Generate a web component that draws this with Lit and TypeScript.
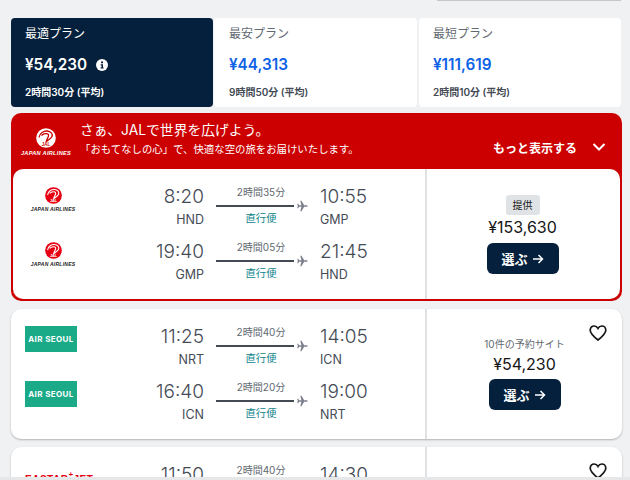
import { LitElement, css, html, svg } from 'lit';
import { customElement } from 'lit/decorators.js';

interface Leg {
  dep: string;
  depCode: string;
  dur: string;
  arr: string;
  arrCode: string;
}

const planeIcon = svg`<path d="M11 6c0-.5-.5-.9-1.200-.9H7.400L4.600.6H3.400l1.200 4.500H2.200L1.200 3.700H.3l.5 2.300-.5 2.300h.9l1-1.400h2.400L3.400 11.400h1.200l2.800-4.500h2.400C10.500 6.900 11 6.500 11 6z"/>`;

@customElement('jal-logo')
export class JalLogo extends LitElement {
  static properties = { light: { type: Boolean, reflect: true } };
  declare light: boolean;

  static styles = css`
    :host {
      display: flex;
      flex-direction: column;
      align-items: center;
      width: 52px;
      margin-left: 2px;
    }
    :host([light]) {
      margin-left: 0;
    }
    svg {
      display: block;
      width: 17px;
      height: 17px;
    }
    :host([light]) svg {
      width: 20px;
      height: 20px;
    }
    .jal {
      font: 700 4.500px 'Liberation Sans', sans-serif;
    }
    .name {
      font: italic 900 5px/6px 'Liberation Sans', sans-serif;
      letter-spacing: 0.25px;
      white-space: nowrap;
      margin-top: 2px;
      color: #1a1a1a;
    }
    :host([light]) .name {
      font-size: 5.6px;
      letter-spacing: 0.3px;
      margin-top: 2px;
      color: #fff;
    }
  `;

  render() {
    const disc = this.light ? '#fff' : '#e60012';
    const mark = this.light ? '#cc0000' : '#fff';
    return html`
      <svg viewBox="0 0 20 20">
        <circle cx="10" cy="10" r="9.800" fill=${disc} />
        <path
          d="M3 9.500C3.500 4.800 8 2.800 11 3c4 .3 6 3 5 5.500-1 2.500-4 3.500-6 5.500M5.500 7.500C8 5.200 11.500 5.200 12.500 6.700c.8 1.300-1.200 3.600-2.500 7.300"
          fill="none"
          stroke=${mark}
          stroke-width="1.300"
        />
        <text class="jal" x="10" y="18" text-anchor="middle" fill=${mark}>JAL</text>
      </svg>
      <div class="name">JAPAN AIRLINES</div>
    `;
  }
}

@customElement('app-root')
export class AppRoot extends LitElement {
  static styles = css`
    :host {
      display: block;
      position: relative;
      height: 480px;
      overflow: hidden;
      background: #eff1f3;
      color: #444b55;
      font-family: Inter, 'Noto Sans CJK JP', sans-serif;
    }
    .page {
      display: flex;
      flex-direction: column;
      padding: 18px 8px 0 11px;
    }
    .top-tab {
      position: absolute;
      top: 0;
      left: 437px;
      width: 184px;
      height: 1px;
      background: #c3c7cb;
    }
    .bottom-strip {
      position: absolute;
      left: 0;
      right: 0;
      bottom: 0;
      height: 3px;
      background: #e6e7e8;
    }
    .tabs {
      display: grid;
      grid-template-columns: 202px 203px 203px;
      height: 89px;
      gap: 1px;
      margin-right: 1px;
    }
    .tab {
      background: #fff;
      border-radius: 4px;
      padding: 7px 14px 0;
      color: #626971;
      overflow: hidden;
    }
    .tab + .tab {
      padding-left: 15px;
    }
    .tab:last-child {
      margin-left: 1px;
      padding-left: 14px;
    }
    .tab.active {
      background: #05203c;
      color: #fff;
    }
    .tab-title {
      font-size: 12px;
      line-height: 17px;
    }
    .tab-price {
      display: flex;
      align-items: center;
      gap: 9px;
      margin-top: 12px;
      font-size: 15.3px;
      line-height: 22px;
      font-weight: 600;
      color: #0d62e6;
    }
    .active .tab-price {
      color: #fff;
    }
    .tab-sub {
      margin-top: 9px;
      font-size: 10px;
      line-height: 14px;
      font-weight: 600;
      color: #444b55;
    }
    .active .tab-sub {
      color: #fff;
    }
    .sponsored {
      margin-top: 6px;
      background: #cc0000;
      border-radius: 10px;
      padding: 0 2px 2px;
    }
    .banner {
      display: flex;
      height: 56px;
      color: #fff;
    }
    .banner-logo {
      width: 64px;
      display: flex;
      align-items: flex-start;
      justify-content: center;
      padding: 15px 0 0 2px;
      box-sizing: border-box;
    }
    .banner-copy {
      flex: 1;
      padding: 7px 0 0 3px;
    }
    .banner-title {
      font-size: 13.8px;
      line-height: 20px;
    }
    .banner-sub {
      font-size: 10.4px;
      line-height: 20px;
    }
    .more {
      display: flex;
      align-items: center;
      gap: 15px;
      padding: 25px 14px 0 0;
      font-size: 12px;
      font-weight: 600;
      height: 18px;
    }
    .card {
      display: grid;
      grid-template-columns: 416px 1fr;
      background: #fff;
      border-radius: 10px;
      height: 130px;
      position: relative;
    }
    .sponsored .card {
      grid-template-columns: 414px 1fr;
    }
    .plain {
      margin-top: 8px;
      box-shadow: 0 1px 2px rgba(37, 32, 31, 0.3);
    }
    .legs {
      display: flex;
      flex-direction: column;
      gap: 3px;
      padding-top: 14px;
      border-right: 2px solid #dfe1e3;
    }
    .leg {
      display: grid;
      grid-template-columns: 66px 113px 104px auto;
      height: 52px;
      align-items: start;
      padding-left: 14px;
    }
    .sponsored .leg {
      padding-left: 12px;
    }
    .logo-cell {
      padding-top: 4px;
    }
    .air-seoul {
      display: flex;
      align-items: center;
      justify-content: center;
      width: 52px;
      height: 26px;
      margin-top: -1px;
      background: #1aaa88;
      color: #fff;
      font: 700 8px/1 Inter, sans-serif;
      letter-spacing: 0.4px;
      white-space: nowrap;
    }
    .place {
      display: flex;
      flex-direction: column;
      padding-top: 2px;
      font-size: 12.5px;
      line-height: 16px;
    }
    .place .time {
      font-size: 19px;
      font-weight: 300;
      line-height: 24px;
      margin-bottom: 3px;
    }
    .dep {
      text-align: right;
    }
    .arr {
      padding-left: 12px;
    }
    .route {
      display: flex;
      flex-direction: column;
      padding-left: 12px;
    }
    .dur {
      width: 90px;
      text-align: center;
      font-size: 10px;
      line-height: 14px;
      color: #626971;
      margin-top: 2px;
    }
    .track {
      display: flex;
      align-items: center;
      gap: 3px;
      height: 11px;
      margin-top: 1px;
    }
    .track i {
      display: block;
      width: 81px;
      height: 2px;
      background: #444b55;
    }
    .track svg {
      fill: #7b7f8c;
    }
    .direct {
      width: 90px;
      text-align: center;
      font-size: 10.4px;
      line-height: 14px;
      color: #0c838a;
      margin-top: 1px;
    }
    .offer {
      display: flex;
      flex-direction: column;
      align-items: center;
    }
    .sponsored .offer {
      padding: 26px 2px 0 0;
    }
    .plain .offer {
      padding-top: 28px;
    }
    .badge {
      background: #e0e3e5;
      border-radius: 3px;
      padding: 0 7px;
      font-size: 10px;
      line-height: 20px;
      color: #161616;
    }
    .sites {
      font-size: 10px;
      line-height: 14px;
      color: #626971;
    }
    .price {
      font-size: 16px;
      line-height: 22px;
      color: #161616;
      margin-top: 1px;
    }
    .plain .price {
      margin-top: 2px;
    }
    .select {
      display: flex;
      align-items: center;
      justify-content: center;
      gap: 4px;
      width: 72px;
      height: 31px;
      margin-top: 5px;
      background: #05203c;
      border-radius: 6px;
      color: #fff;
      font-size: 13px;
      font-weight: 700;
    }
    .plain .select {
      margin-top: 4px;
    }
    .heart {
      position: absolute;
      top: 15px;
      right: 15px;
    }
    .fastar {
      display: flex;
      font: 700 10px/12px 'Liberation Sans', sans-serif;
      color: #e60012;
      letter-spacing: 0.5px;
      white-space: nowrap;
      padding-top: 9px;
    }
    .fastar sup {
      font-size: 8px;
      line-height: 8px;
      margin-top: -3px;
    }
  `;

  private renderLeg(leg: Leg, logo: unknown) {
    return html`
      <div class="leg">
        <div class="logo-cell">${logo}</div>
        <div class="place dep">
          <span class="time">${leg.dep}</span><span>${leg.depCode}</span>
        </div>
        <div class="route">
          <div class="dur">${leg.dur}</div>
          <div class="track">
            <i></i>
            <svg width="11" height="12" viewBox="0 0 11 12">${planeIcon}</svg>
          </div>
          <div class="direct">直行便</div>
        </div>
        <div class="place arr">
          <span class="time">${leg.arr}</span><span>${leg.arrCode}</span>
        </div>
      </div>
    `;
  }

  private heart() {
    return html`
      <svg class="heart" width="18" height="18" viewBox="0 0 18 18">
        <path
          d="M9 16C4 12 1.200 9.500 1.200 6.200 1.200 3.700 3 2 5.100 2 6.700 2 8.200 2.900 9 4.400 9.800 2.900 11.300 2 12.900 2c2.100 0 3.900 1.700 3.900 4.200C16.800 9.500 14 12 9 16z"
          fill="none"
          stroke="#161616"
          stroke-width="1.700"
        />
      </svg>
    `;
  }

  private selectButton() {
    return html`
      <div class="select">
        選ぶ
        <svg width="12" height="12" viewBox="0 0 12 12" fill="none" stroke="#fff" stroke-width="1.500">
          <path d="M1 6h9.500M6.500 2l4 4-4 4" />
        </svg>
      </div>
    `;
  }

  render() {
    const jal = html`<jal-logo></jal-logo>`;
    const seoul = html`<div class="air-seoul">AIR SEOUL</div>`;
    return html`
      <div class="top-tab"></div>
      <div class="page">
        <div class="tabs">
          <div class="tab active">
            <div class="tab-title">最適プラン</div>
            <div class="tab-price">
              ¥54,230
              <svg width="12" height="12" viewBox="0 0 12 12">
                <circle cx="6" cy="6" r="6" fill="#fff" />
                <path d="M5 2.500h2v1.800H5zM4.600 5.200h2.400v3.200h.7v1.100H4.500V8.400h.9V6.300h-.8z" fill="#05203c" />
              </svg>
            </div>
            <div class="tab-sub">2時間30分 (平均)</div>
          </div>
          <div class="tab">
            <div class="tab-title">最安プラン</div>
            <div class="tab-price">¥44,313</div>
            <div class="tab-sub">9時間50分 (平均)</div>
          </div>
          <div class="tab">
            <div class="tab-title">最短プラン</div>
            <div class="tab-price">¥111,619</div>
            <div class="tab-sub">2時間10分 (平均)</div>
          </div>
        </div>

        <div class="sponsored">
          <div class="banner">
            <div class="banner-logo"><jal-logo light></jal-logo></div>
            <div class="banner-copy">
              <div class="banner-title">さぁ、JALで世界を広げよう。</div>
              <div class="banner-sub">「おもてなしの心」で、快適な空の旅をお届けいたします。</div>
            </div>
            <div class="more">
              もっと表示する
              <svg width="14" height="10" viewBox="0 0 14 10" fill="none" stroke="#fff" stroke-width="2">
                <path d="M1.500 2l5.500 5.500L12.500 2" />
              </svg>
            </div>
          </div>
          <div class="card">
            <div class="legs">
              ${this.renderLeg({ dep: '8:20', depCode: 'HND', dur: '2時間35分', arr: '10:55', arrCode: 'GMP' }, jal)}
              ${this.renderLeg({ dep: '19:40', depCode: 'GMP', dur: '2時間05分', arr: '21:45', arrCode: 'HND' }, jal)}
            </div>
            <div class="offer">
              <div class="badge">提供</div>
              <div class="price">¥153,630</div>
              ${this.selectButton()}
            </div>
          </div>
        </div>

        <div class="card plain">
          <div class="legs">
            ${this.renderLeg({ dep: '11:25', depCode: 'NRT', dur: '2時間40分', arr: '14:05', arrCode: 'ICN' }, seoul)}
            ${this.renderLeg({ dep: '16:40', depCode: 'ICN', dur: '2時間20分', arr: '19:00', arrCode: 'NRT' }, seoul)}
          </div>
          <div class="offer">
            <div class="sites">10件の予約サイト</div>
            <div class="price">¥54,230</div>
            ${this.selectButton()}
          </div>
          ${this.heart()}
        </div>

        <div class="card plain">
          <div class="legs">
            ${this.renderLeg(
              { dep: '11:50', depCode: 'NRT', dur: '2時間40分', arr: '14:30', arrCode: 'ICN' },
              html`<div class="fastar">EASTAR<sup>+</sup>JET</div>`,
            )}
          </div>
          <div class="offer"></div>
          ${this.heart()}
        </div>
      </div>
      <div class="bottom-strip"></div>
    `;
  }
}
